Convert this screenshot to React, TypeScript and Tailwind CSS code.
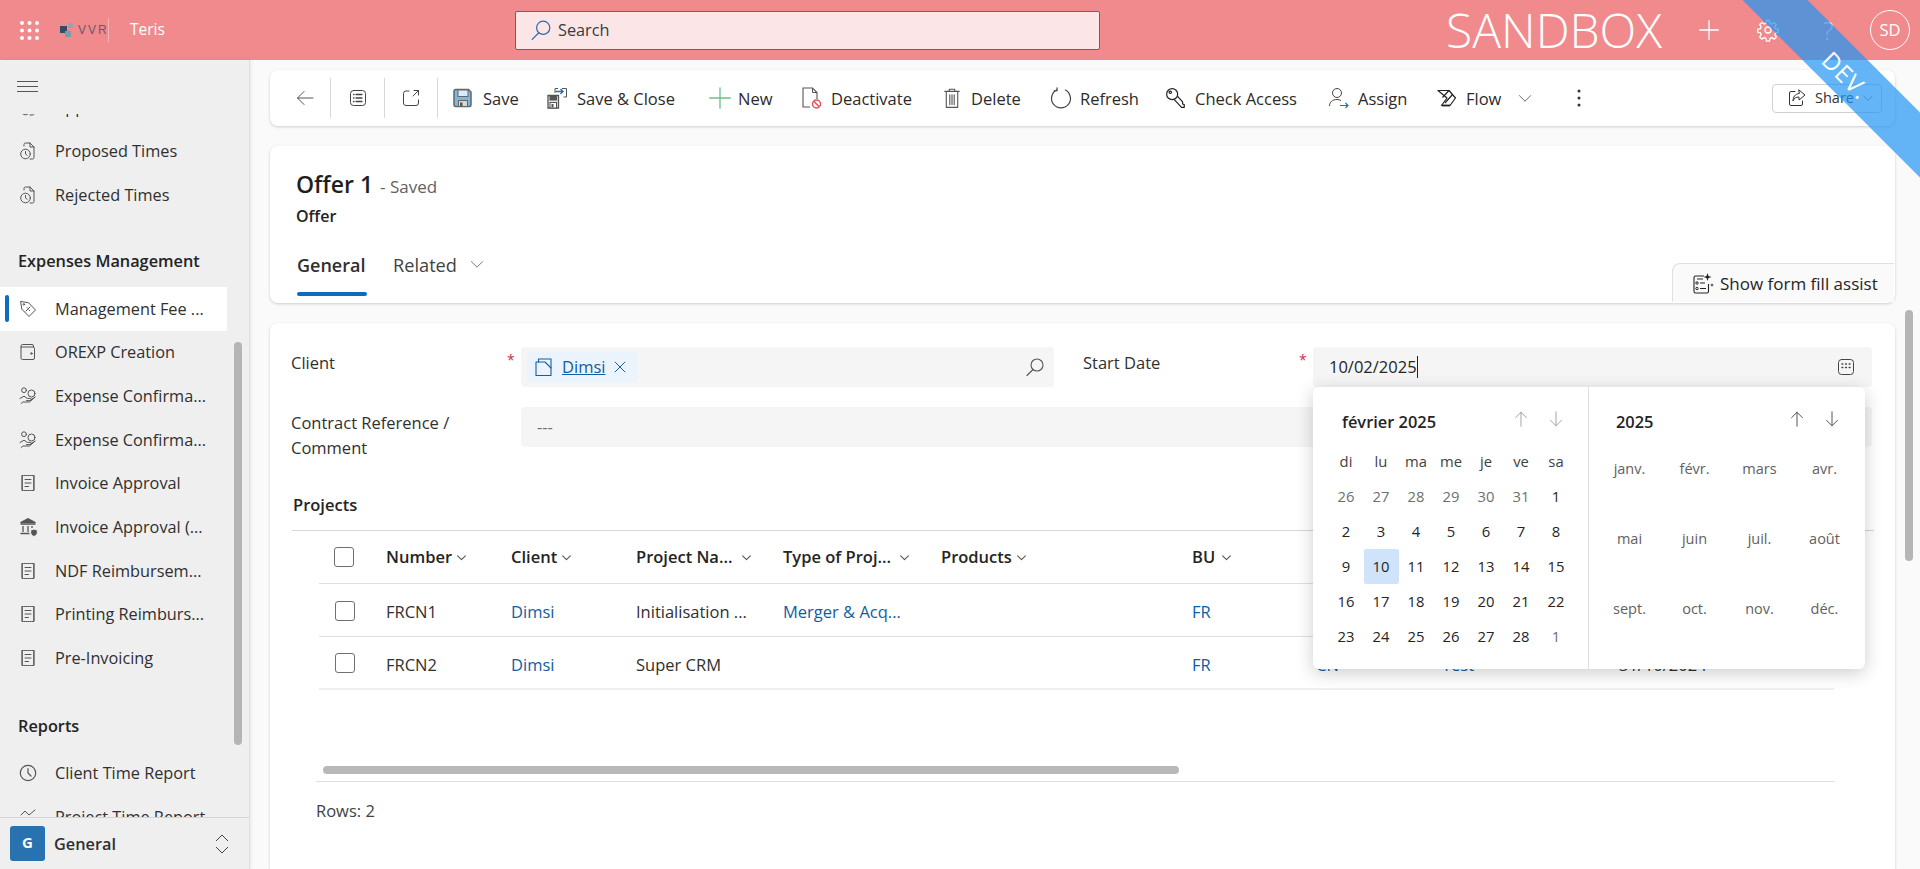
import React from "react";

type P = { s?: number; c?: string; w?: number; children?: React.ReactNode };
const S = ({ s = 20, c = "currentColor", w = 1, children }: P) => (
  <svg width={s} height={s} viewBox="0 0 20 20" fill="none" stroke={c} strokeWidth={w} strokeLinecap="round" strokeLinejoin="round" className="shrink-0">
    {children}
  </svg>
);

const GridDots = () => (
  <svg width="19" height="19" viewBox="0 0 19 19" fill="#fff" className="shrink-0">
    {[2, 9.5, 17].flatMap((y) => [2, 9.5, 17].map((x) => <circle key={`${x}-${y}`} cx={x} cy={y} r="2" />))}
  </svg>
);
const SearchIc = ({ c = "#2b6cb0", s = 22 }: { c?: string; s?: number }) => (
  <S s={s} c={c} w={1.1}>
    <circle cx="12" cy="8" r="6" />
    <path d="M8 12.5L2 18.5" />
  </S>
);
const DocClock = () => (
  <S s={20} c="#555">
    <path d="M6 5V3.5A1.5 1.5 0 0 1 7.5 2H12l4 4v10.5a1.5 1.5 0 0 1-1.5 1.5H12" />
    <path d="M12 2v4h4" />
    <circle cx="7.5" cy="13" r="4.8" />
    <path d="M7.5 10.5V13l1.6 1.2" />
  </S>
);
const TagIc = () => (
  <S s={20} c="#555">
    <path d="M3 2.5l7.5 1.2 7 7.3-6.5 6.500-7-7.200z" />
    <circle cx="5.8" cy="5.4" r="0.8" />
    <path d="M8 12l4-4M9 8.6l.6.6M11 11l.6.6" />
  </S>
);
const WalletIc = () => (
  <S s={20} c="#555">
    <path d="M15.5 5V4a1.5 1.5 0 0 0-1.5-1.5H4.5A1.5 1.5 0 0 0 3 4v12a1.5 1.5 0 0 0 1.5 1.5H15a1.5 1.5 0 0 0 1.5-1.5V6.5A1.5 1.5 0 0 0 15 5H3.2" />
    <circle cx="13.4" cy="11.5" r="0.8" />
  </S>
);
const HandIc = () => (
  <S s={20} c="#555">
    <circle cx="6" cy="4.2" r="2.4" />
    <circle cx="13.5" cy="7.5" r="3.5" />
    <path d="M2 12.5l4-2.3 3.3 2.2h3a1 1 0 0 1 0 2.2H8.5M12.5 14l4.5-2.8M3.2 17.5l1.7-1.5h6.5l5.6-4.8" />
  </S>
);
const ReceiptIc = () => (
  <S s={20} c="#555">
    <path d="M4 2.5h12v15H4z" strokeDasharray="1.2 0.8" />
    <path d="M4.2 3v14M15.8 3v14M7 6.5h6M7 10h6M7 13.5h3.5" />
  </S>
);
const BankIc = () => (
  <svg width="22" height="22" viewBox="0 0 22 22" fill="none" stroke="#555" strokeWidth="1" className="shrink-0">
    <path d="M2.5 6.5L10 2.5l7.5 4z" fill="#555" />
    <path d="M2.5 8h15M5 10v6M10 10v6M14 10v2M2.5 17.5h9" strokeWidth="1.3" />
    <path d="M16 13l3.3 1.2v2.6c0 2-1.5 3-3.3 3.7-1.8-.7-3.3-1.7-3.3-3.7v-2.6z" fill="#555" stroke="#efefef" />
  </svg>
);
const ClockIc = () => (
  <S s={20} c="#555" w={1.2}>
    <circle cx="10" cy="10" r="7.7" />
    <path d="M10 5.5V10l3 3" />
  </S>
);
const ChartIc = () => (
  <S s={20} c="#555">
    <path d="M3 8l4-4 4 4 6-5" />
  </S>
);
const Chev = ({ s = 12, c = "#424242", w = 1.2 }: { s?: number; c?: string; w?: number }) => (
  <S s={s} c={c} w={w}>
    <path d="M3 7l7 7 7-7" />
  </S>
);

const Back = () => (
  <S c="#555"><path d="M18 10H2.5M9 3.5L2.5 10 9 16.5" /></S>
);
const ListIc = () => (
  <S c="#444">
    <rect x="2.5" y="2.5" width="15" height="15" rx="3" />
    <path d="M8 6.5h6M8 10h6M8 13.5h6M5.5 6.5h.5M5.5 10h.5M5.5 13.5h.5" strokeWidth="1.3" />
  </S>
);
const PopIc = () => (
  <S c="#444">
    <path d="M8 3H5a2.5 2.5 0 0 0-2.5 2.5v9.500A2.500 2.500 0 0 0 5 17.500h10a2.500 2.500 0 0 0 2.500-2.500V12" />
    <path d="M13 2.500h4.500V7M17.500 2.500L12 8" />
  </S>
);
const SaveIc = () => (
  <svg width="20" height="20" viewBox="0 0 20 20" className="shrink-0">
    <path d="M2.500 1.500h13l2.500 2.500v13a1.500 1.500 0 0 1-1.500 1.500h-14A1.500 1.500 0 0 1 1 17V3a1.500 1.500 0 0 1 1.500-1.500z" fill="#7ab8e8" stroke="#666" strokeWidth="1.500" />
    <rect x="5" y="2" width="10" height="6.500" fill="#dcebf7" stroke="#666" />
    <rect x="5.500" y="12.500" width="9" height="6" fill="#d8d8d8" stroke="#666" />
    <rect x="7" y="14.500" width="2.500" height="3.500" fill="#555" />
  </svg>
);
const SaveCloseIc = () => (
  <svg width="20" height="22" viewBox="0 0 20 22" className="shrink-0">
    <path d="M1 8.500h10.500V21H1z" fill="#e4e4e4" stroke="#555" strokeWidth="1.300" />
    <rect x="3" y="9" width="6.500" height="4" fill="#555" stroke="#555" />
    <rect x="3" y="15.500" width="6.500" height="5.500" fill="#fff" stroke="#555" />
    <rect x="4.500" y="17" width="2" height="3.500" fill="#555" />
    <path d="M8 6V1.500h3M15 1.500h4.500V10h-3" fill="none" stroke="#555" />
    <path d="M8.500 4.500h7.500M13.500 2l2.500 2.500L13.500 7" fill="none" stroke="#1c6fc0" strokeWidth="1.400" />
  </svg>
);
const PlusIc = ({ c = "#6cbf8a", s = 24, w = 1.1 }: { c?: string; s?: number; w?: number }) => (
  <S s={s} c={c} w={w}><path d="M10 1.500v17M1.500 10h17" /></S>
);
const DeactIc = () => (
  <svg width="22" height="24" viewBox="0 0 22 24" fill="none" className="shrink-0">
    <path d="M9 21H2V2h9.500L16 6.500V13" stroke="#555" strokeWidth="1.1" />
    <path d="M11.500 2v4.500H16" stroke="#555" />
    <circle cx="15.500" cy="18" r="4" stroke="#e8505b" strokeWidth="1.5" />
    <path d="M12.800 15.300l5.400 5.400" stroke="#e8505b" strokeWidth="1.5" />
  </svg>
);
const TrashIc = () => (
  <S s={22} c="#555">
    <path d="M3.500 4h13M7.500 4V2h5v2M4.800 4.500v14h10.400v-14M8 7v9M10 7v9M12 7v9" />
  </S>
);
const RefreshIc = () => (
  <S s={22} c="#444" w={1.1}>
    <path d="M6 2.800a8.600 8.600 0 1 0 8 0" />
    <path d="M6.400 .8v2.600H3.800" />
  </S>
);
const KeyIc = () => (
  <S s={22} c="#222" w={1.1}>
    <path d="M8.500 11.500L15 18.500h2.500v-2.500l-1.500-.5V13.500l-4.500-5" />
    <ellipse cx="6.500" cy="6.500" rx="5" ry="5" />
    <circle cx="4.800" cy="4.800" r="1.100" />
  </S>
);
const AssignIc = () => (
  <svg width="22" height="22" viewBox="0 0 22 22" fill="none" className="shrink-0">
    <circle cx="9" cy="6" r="4.500" stroke="#444" />
    <path d="M1.500 19c0-4 3-6.500 7.500-6.500 1.500 0 3 .3 4 1" stroke="#444" />
    <path d="M12 18.500h8M17.500 16l2.500 2.500-2.500 2.500" stroke="#1c6fc0" strokeWidth="1.200" />
  </svg>
);
const FlowIc = () => (
  <svg width="20" height="20" viewBox="0 0 20 20" fill="none" stroke="#222" strokeWidth="1.200" strokeLinejoin="round" className="shrink-0">
    <path d="M1 2.500h11l6.500 7.500-5.500 7.500H4.500L10 10z" />
    <path d="M12 2.500L5.500 9.500M15.500 6.500L8 15" />
    <path d="M5 17.500h8" strokeWidth="1.800" />
  </svg>
);
const ShareIc = () => (
  <S s={20} c="#333">
    <path d="M8 3.500H4A1.500 1.500 0 0 0 2.500 5v11A1.500 1.500 0 0 0 4 17.500h10a1.500 1.500 0 0 0 1.500-1.500v-3" />
    <path d="M12 2l6 5-6 5V9c-3 0-5 1-6 4 0-4 2-7 6-7.500z" />
  </S>
);
const AssistIc = () => (
  <svg width="22" height="24" viewBox="0 0 22 24" fill="none" stroke="#242424" className="shrink-0">
    <path d="M12 4H3.500A1.500 1.500 0 0 0 2 5.500v14A1.500 1.500 0 0 0 3.500 21H15a1.500 1.500 0 0 0 1.500-1.500V12" strokeWidth="1.100" />
    <circle cx="5" cy="11" r="1.200" /><circle cx="5" cy="16.500" r="1.200" />
    <path d="M8 11h5M8 16.500h6M5 7h6" />
    <path d="M15.500 1l1 3 3 1-3 1-1 3-1-3-3-1 3-1zM20 11l.5 1.500 1.500.5-1.500.5-.5 1.500-.5-1.500-1.500-.5 1.500-.5z" fill="#242424" stroke="none" />
  </svg>
);
const EntityIc = () => (
  <S s={20} c="#115ea3" w={1.100}>
    <path d="M2 5h9l6 6v7.500H2z" />
    <path d="M4.500 5V2h12.500v9" />
  </S>
);
const CalIc = () => (
  <S s={20} c="#444">
    <rect x="2.500" y="2.500" width="15" height="15" rx="3" />
    <path d="M6 7h.8M9.600 7h.8M13.200 7h.8M6 10.500h.8M9.600 10.500h.8M13.200 10.500h.8" strokeWidth="1.500" />
  </S>
);
const Arrow = ({ up, c }: { up?: boolean; c: string }) => (
  <S s={18} c={c}>
    {up ? <path d="M10 18V2.500M4 8.500l6-6 6 6" /> : <path d="M10 2v15.500M4 11.500l6 6 6-6" />}
  </S>
);
const Box = () => <span className="block w-[20px] h-[20px] rounded-[3px] border border-[#707070] bg-white" />;

const topItems: { t: string; i: React.ReactNode }[] = [
  { t: "Proposed Times", i: <DocClock /> },
  { t: "Rejected Times", i: <DocClock /> },
];
const midItems: { t: string; i: React.ReactNode; active?: boolean }[] = [
  { t: "Management Fee ...", i: <TagIc />, active: true },
  { t: "OREXP Creation", i: <WalletIc /> },
  { t: "Expense Confirma...", i: <HandIc /> },
  { t: "Expense Confirma...", i: <HandIc /> },
  { t: "Invoice Approval", i: <ReceiptIc /> },
  { t: "Invoice Approval (...", i: <BankIc /> },
  { t: "NDF Reimbursem...", i: <ReceiptIc /> },
  { t: "Printing Reimburs...", i: <ReceiptIc /> },
  { t: "Pre-Invoicing", i: <ReceiptIc /> },
];

const NavRow = ({ t, i, active }: { t: string; i: React.ReactNode; active?: boolean }) => (
  <div className={active ? "relative flex items-center h-[43.670px] w-[227px] bg-white pl-[18px]" : "flex items-center h-[43.670px] w-[227px] pl-[18px]"}>
    {active && <span className="absolute left-[5px] top-[8px] w-[4px] h-[27px] rounded-full bg-[#0f6cbd]" />}
    <span className="w-[37px] shrink-0 flex">{i}</span>
    <span className="text-[16.300px] text-[#303030] whitespace-nowrap">{t}</span>
  </div>
);

const tools: { t: string; i: React.ReactNode; w: string }[] = [
  { t: "Save", i: <SaveIc />, w: "w-[94px]" },
  { t: "Save & Close", i: <SaveCloseIc />, w: "w-[161px]" },
  { t: "New", i: <PlusIc />, w: "w-[93px]" },
  { t: "Deactivate", i: <DeactIc />, w: "w-[140px]" },
  { t: "Delete", i: <TrashIc />, w: "w-[109px]" },
  { t: "Refresh", i: <RefreshIc />, w: "w-[115px]" },
  { t: "Check Access", i: <KeyIc />, w: "w-[163px]" },
  { t: "Assign", i: <AssignIc />, w: "w-[109px]" },
];

const cols = "grid grid-cols-[67px_125px_125px_147px_158px_251px_124px_126px_177px_1fr] items-center w-[1515px] ml-[28px]";
const link = "text-[#115ea3]";

const Hd = ({ t, gap = "ml-[4px]" }: { t: string; gap?: string }) => (
  <div className="flex items-center pt-[2px] font-semibold text-[16.500px] text-[#242424] whitespace-nowrap">
    {t}
    <span className={gap}><Chev s={11} c="#555" w={2} /></span>
  </div>
);

const dow = ["di", "lu", "ma", "me", "je", "ve", "sa"];
const days: { d: number; out?: boolean }[] = [
  ...[26, 27, 28, 29, 30, 31].map((d) => ({ d, out: true })),
  ...Array.from({ length: 28 }, (_, i) => ({ d: i + 1 })),
  { d: 1, out: true },
];
const months = ["janv.", "févr.", "mars", "avr.", "mai", "juin", "juil.", "août", "sept.", "oct.", "nov.", "déc."];

const Calendar = () => (
  <div className="absolute left-[1043px] top-[64px] w-[552px] h-[282px] flex rounded-[6px] bg-white shadow-[0_4px_18px_rgba(0,0,0,0.2)] text-[#242424]">
    <div className="w-[276px] border-r border-[#e0e0e0] shrink-0 pl-[15.500px]">
      <div className="flex items-center h-[56.500px] pl-[13.500px] pt-[14px]">
        <span className="font-semibold text-[16.400px] w-[170px] whitespace-nowrap">février 2025</span>
        <span className="-mt-[6px] flex gap-[17px]">
          <Arrow up c="#9a9a9a" />
          <Arrow c="#9a9a9a" />
        </span>
      </div>
      <div className="grid grid-cols-[repeat(7,35px)] auto-rows-[35px] text-[14.800px] text-center items-center">
        {dow.map((d) => (
          <span key={d} className="text-[#424242]">{d}</span>
        ))}
        {days.map((x, i) => (
          <span
            key={i}
            className={
              x.d === 10 && !x.out
                ? "flex h-full items-center justify-center rounded-[2px] bg-[#cfe4fa]"
                : x.out
                  ? "text-[#6f6f6f]"
                  : "text-[#242424]"
            }
          >
            {x.d}
          </span>
        ))}
      </div>
    </div>
    <div className="flex-1 pl-[8px]">
      <div className="flex items-center h-[47px] pl-[19px] pt-[23px]">
        <span className="font-semibold text-[16.400px] w-[172px]">2025</span>
        <span className="-mt-[6px] flex gap-[17px]">
          <Arrow up c="#424242" />
          <Arrow c="#424242" />
        </span>
      </div>
      <div className="grid grid-cols-[repeat(4,65px)] auto-rows-[70px] text-[14.500px] text-center items-center text-[#616161]">
        {months.map((m) => (
          <span key={m}>{m}</span>
        ))}
      </div>
    </div>
  </div>
);

export default function App() {
  return (
    <div className="relative w-screen h-screen overflow-hidden flex flex-col bg-[#fafafa] font-['Open_Sans',sans-serif] text-[#242424]">
      {/* Header */}
      <header className="h-[60px] shrink-0 flex items-center bg-[#f18a8d] pl-[20px] text-white">
        <GridDots />
        <div className="ml-[21px] w-[49px] h-[24px] flex items-center border-r border-[#f7b4b6]">
          <svg width="14" height="16" viewBox="0 0 14 16" className="shrink-0">
            <rect x="0" y="4" width="7" height="7" fill="#2c4f66" />
            <rect x="8" y="1" width="5" height="5" fill="#9aa3a8" />
            <rect x="5" y="9" width="6" height="6" fill="#7e98a8" />
          </svg>
          <span className="ml-[4px] text-[12px] leading-none tracking-[2px] text-[#6b5a66] font-['Liberation_Sans',sans-serif] whitespace-nowrap">VVR</span>
        </div>
        <span className="ml-[21px] w-[34px] text-[15.500px] whitespace-nowrap">Teris</span>
        <div className="ml-[351px] w-[585px] h-[39px] flex items-center rounded-[2px] border border-[#666] bg-[#fbe5e7] pl-[14px] text-[#3a3a3a]">
          <SearchIc />
          <span className="ml-[6px] text-[16.300px]">Search</span>
        </div>
        <span className="ml-[346px] w-[218px] text-[48px] leading-none font-light whitespace-nowrap">SANDBOX</span>
        <span className="ml-[34px]"><PlusIc c="#fff" s={22} w={1.200} /></span>
        <svg width="24" height="24" viewBox="0 0 24 24" fill="none" stroke="#fff" strokeWidth="1.300" className="ml-[36px] shrink-0">
          <circle cx="12" cy="12" r="3" />
          <path d="M10.500 2.500h3l.6 2.800 1.700.7 2.400-1.500 2.100 2.100-1.500 2.400.7 1.700 2.800.6v3l-2.800.6-.7 1.700 1.500 2.400-2.100 2.100-2.400-1.500-1.700.7-.6 2.800h-3l-.6-2.800-1.700-.7-2.400 1.500-2.100-2.100 1.500-2.400-.7-1.700-2.800-.6v-3l2.800-.6.7-1.700-1.500-2.400 2.100-2.100 2.400 1.500 1.700-.7z" />
        </svg>
        <span className="ml-[43px] text-[25px] font-light leading-none">?</span>
        <span className="ml-auto mr-[10px] w-[40px] h-[40px] rounded-full border border-white flex items-center justify-center text-[16.500px]">SD</span>
      </header>

      <div className="flex flex-1 min-h-0">
        {/* Sidebar */}
        <aside className="w-[250px] shrink-0 flex flex-col bg-[#efefef] border-r border-[#dedede] shadow-[1px_0_4px_rgba(0,0,0,0.08)]">
          <div className="h-[54px] shrink-0 flex items-start pt-[21px] pl-[17px]">
            <svg width="22" height="12" viewBox="0 0 22 12" stroke="#555" className="shrink-0">
              <path d="M0 .5h21M0 5.500h21M0 10.500h21" />
            </svg>
          </div>
          <div className="flex flex-1 min-h-0">
            <nav className="w-[234px] shrink-0 overflow-hidden">
              <div className="-mt-[28.400px]">
                <NavRow t="Approved Times" i={<DocClock />} />
                {topItems.map((x) => (
                  <NavRow key={x.t} {...x} />
                ))}
                <div className="h-[70.400px] pt-[32px] pl-[18px] font-semibold text-[16.300px] text-[#242424]">Expenses Management</div>
                {midItems.map((x, i) => (
                  <NavRow key={i} {...x} />
                ))}
                <div className="h-[71.700px] pt-[34px] pl-[18px] font-semibold text-[16.300px] text-[#242424]">Reports</div>
                <NavRow t="Client Time Report" i={<ClockIc />} />
                <NavRow t="Project Time Report" i={<ChartIc />} />
              </div>
            </nav>
            <div className="w-[8px] h-[403px] mt-[228px] rounded-full bg-[#b5b5b5] shrink-0" />
          </div>
          <div className="h-[52px] shrink-0 flex items-center border-t border-[#d4d4d4] pl-[10px]">
            <span className="w-[35px] h-[35px] rounded-[3px] bg-[#2872b0] flex justify-center pt-[6px] text-white text-[15px] font-bold leading-[20px]">G</span>
            <span className="ml-[9px] w-[64px] pt-[1px] font-semibold text-[16.300px] text-[#303030]">General</span>
            <svg width="16" height="22" viewBox="0 0 16 22" fill="none" stroke="#444" className="ml-[96px] shrink-0">
              <path d="M2 8l6-6 6 6M2 14l6 6 6-6" />
            </svg>
          </div>
        </aside>

        {/* Main */}
        <main className="flex-1 min-w-0 flex">
          <div className="ml-[20px] w-[1625px] shrink-0 flex flex-col pt-[10px] min-h-0">
            {/* Toolbar */}
            <div className="h-[56px] shrink-0 flex items-center rounded-[8px] bg-white shadow-[0_1px_3px_rgba(0,0,0,0.18)] text-[16.500px] text-[#2b2b2b]">
              <div className="w-[61px] h-[40px] flex items-center justify-center border-r border-[#d9d9d9] pl-[10px]"><Back /></div>
              <div className="w-[54px] h-[40px] flex items-center justify-center border-r border-[#d9d9d9]"><ListIc /></div>
              <div className="w-[53px] h-[40px] flex items-center justify-center border-r border-[#d9d9d9]"><PopIc /></div>
              <div className="ml-[15px] flex items-center">
                {tools.map((x) => (
                  <div key={x.t} className={`${x.w} flex items-center whitespace-nowrap`}>
                    <span className="w-[30px] shrink-0 flex">{x.i}</span>
                    <span className="pt-[2px]">{x.t}</span>
                  </div>
                ))}
                <div className="flex items-center">
                  <span className="w-[29px] shrink-0 flex"><FlowIc /></span>
                  <span className="pt-[2px]">Flow</span>
                  <span className="ml-[16px]"><Chev s={16} c="#444" w={1} /></span>
                </div>
                <svg width="4" height="20" viewBox="0 0 4 20" fill="#333" className="ml-[44px] shrink-0">
                  <circle cx="2" cy="3" r="1.500" /><circle cx="2" cy="10" r="1.500" /><circle cx="2" cy="17" r="1.500" />
                </svg>
              </div>
              <div className="ml-auto mr-[13px] w-[110px] h-[29px] flex items-center rounded-[4px] border border-[#d1d1d1] bg-white pl-[14px] text-[14.500px] text-[#333]">
                <ShareIc />
                <span className="ml-[8px]">Share</span>
                <span className="ml-[8px]"><Chev s={12} c="#555" /></span>
              </div>
            </div>

            {/* Form header */}
            <div className="mt-[20px] h-[157px] shrink-0 rounded-[8px] bg-white shadow-[0_1px_3px_rgba(0,0,0,0.18)] pl-[26px] pt-[22px] flex flex-col">
              <div className="flex items-baseline h-[32px]">
                <span className="text-[23px] font-semibold leading-[32px] text-[#1f1f1f]">Offer 1</span>
                <span className="ml-[7px] text-[17px] text-[#616161]">- Saved</span>
              </div>
              <div className="mt-[4px] h-[24px] text-[16px] font-semibold leading-[24px] text-[#242424]">Offer</div>
              <div className="flex-1 flex items-end justify-between pr-[1px]">
                <div className="flex pb-[7px]">
                  <div className="flex flex-col items-start pl-[1px]">
                    <span className="text-[18px] font-semibold leading-[24px] text-[#303030]">General</span>
                    <span className="mt-[15px] h-[4px] w-[70px] rounded-full bg-[#0f6cbd]" />
                  </div>
                  <div className="ml-[26px] flex items-start text-[18.200px] leading-[24px] text-[#424242]">
                    Related
                    <span className="ml-[12px] mt-[3px]"><Chev s={16} c="#555" w={1} /></span>
                  </div>
                </div>
                <div className="w-[222px] h-[39px] mb-[1px] flex items-center rounded-tl-[8px] border-t border-l border-[#e0e0e0] bg-[#fafafa] pl-[19px] pt-[2px] text-[17px] font-medium text-[#242424] whitespace-nowrap">
                  <AssistIc />
                  <span className="ml-[6px]">Show form fill assist</span>
                </div>
              </div>
            </div>

            {/* Form card */}
            <div className="relative mt-[20px] flex-1 min-h-0 rounded-t-[8px] bg-white shadow-[0_1px_3px_rgba(0,0,0,0.18)] pl-[21px] pt-[24px] text-[16.500px] text-[#303030]">
              <div className="flex items-start">
                <div className="w-[216px] shrink-0 pt-[2.500px] leading-[25px]">Client</div>
                <span className="w-[14px] shrink-0 pt-[2px] text-[#c4314b] text-[14px]">*</span>
                <div className="w-[533px] h-[40px] rounded-[4px] bg-[#f5f5f5] flex items-center pl-[6px] pr-[9px]">
                  <div className="w-[111px] h-[30px] flex items-center rounded-[4px] bg-[#ebf3fc] pl-[7px]">
                    <EntityIc />
                    <span className={`ml-[8px] underline ${link}`}>Dimsi</span>
                    <span className="ml-[8px]">
                      <S s={14} c="#115ea3" w={1.400}><path d="M3 3l14 14M17 3L3 17" /></S>
                    </span>
                  </div>
                  <span className="ml-auto"><SearchIc c="#555" s={20} /></span>
                </div>
                <div className="ml-[29px] w-[216px] shrink-0 pt-[2.500px] leading-[25px]">Start Date</div>
                <span className="w-[14px] shrink-0 pt-[2px] text-[#c4314b] text-[14px]">*</span>
                <div className="w-[559px] h-[40px] rounded-[4px] bg-[#f5f5f5] flex items-center pl-[16px] pr-[16px]">
                  <span className="border-r border-[#222] pr-[0.500px] text-[#242424] leading-[22px]">10/02/2025</span>
                  <span className="ml-auto"><CalIc /></span>
                </div>
              </div>
              <div className="flex items-start mt-[20px]">
                <div className="w-[230px] shrink-0 pt-[2.500px] pb-[1px] leading-[25px] whitespace-nowrap">Contract Reference /<br />Comment</div>
                <div className="w-[1351px] h-[40px] rounded-[4px] bg-[#f5f5f5] flex items-center pl-[16px] text-[#707070]">---</div>
              </div>

              <div className="mt-[32px] ml-[2px] h-[24px] leading-[24px] font-semibold text-[#242424]">Projects</div>
              <div className="mt-[13px] ml-[1px] w-[1582px] h-px bg-[#d6d6d6]" />

              <div className={`${cols} h-[53px] border-b border-[#e0e0e0]`}>
                <span className="pl-[15px]"><Box /></span>
                <Hd t="Number" />
                <Hd t="Client" />
                <Hd t="Project Na..." gap="ml-[8px]" />
                <Hd t="Type of Proj..." gap="ml-[8px]" />
                <Hd t="Products" />
                <Hd t="BU" gap="ml-[6px]" />
              </div>
              <div className={`${cols} h-[53px] border-b border-[#e0e0e0] pt-[6px]`}>
                <span className="pl-[16px] -mt-[4px]"><Box /></span>
                <span>FRCN1</span>
                <span className={link}>Dimsi</span>
                <span>Initialisation ...</span>
                <span className={link}>Merger &amp; Acq...</span>
                <span />
                <span className={link}>FR</span>
              </div>
              <div className={`${cols} h-[53px] border-b-2 border-[#efefef] pt-[6px]`}>
                <span className="pl-[16px] -mt-[4px]"><Box /></span>
                <span>FRCN2</span>
                <span className={link}>Dimsi</span>
                <span>Super CRM</span>
                <span />
                <span />
                <span className={link}>FR</span>
                <span className={link}>CN</span>
                <span className={link}>Test</span>
                <span>31/10/2024</span>
              </div>

              <div className="mt-[76px] ml-[32px] w-[856px] h-[8px] rounded-full bg-[#b8b8b8]" />
              <div className="mt-[7px] ml-[25px] w-[1519px] h-px bg-[#e0e0e0]" />
              <div className="mt-[17px] ml-[25px] leading-[24px] text-[#424242]">Rows: 2</div>

              <Calendar />
            </div>
          </div>
          <div className="ml-[10px] mt-[250px] w-[8px] h-[251px] rounded-full bg-[#b5b5b5] shrink-0" />
        </main>
      </div>

      {/* DEV ribbon */}
      <div className="absolute left-[1648px] top-[50px] z-50 w-[400px] h-[46px] rotate-45 bg-[#2196f3]/70 flex items-center justify-center pt-[6px] pointer-events-none text-white text-[24px] tracking-[1px]">
        DEV.
      </div>
    </div>
  );
}
